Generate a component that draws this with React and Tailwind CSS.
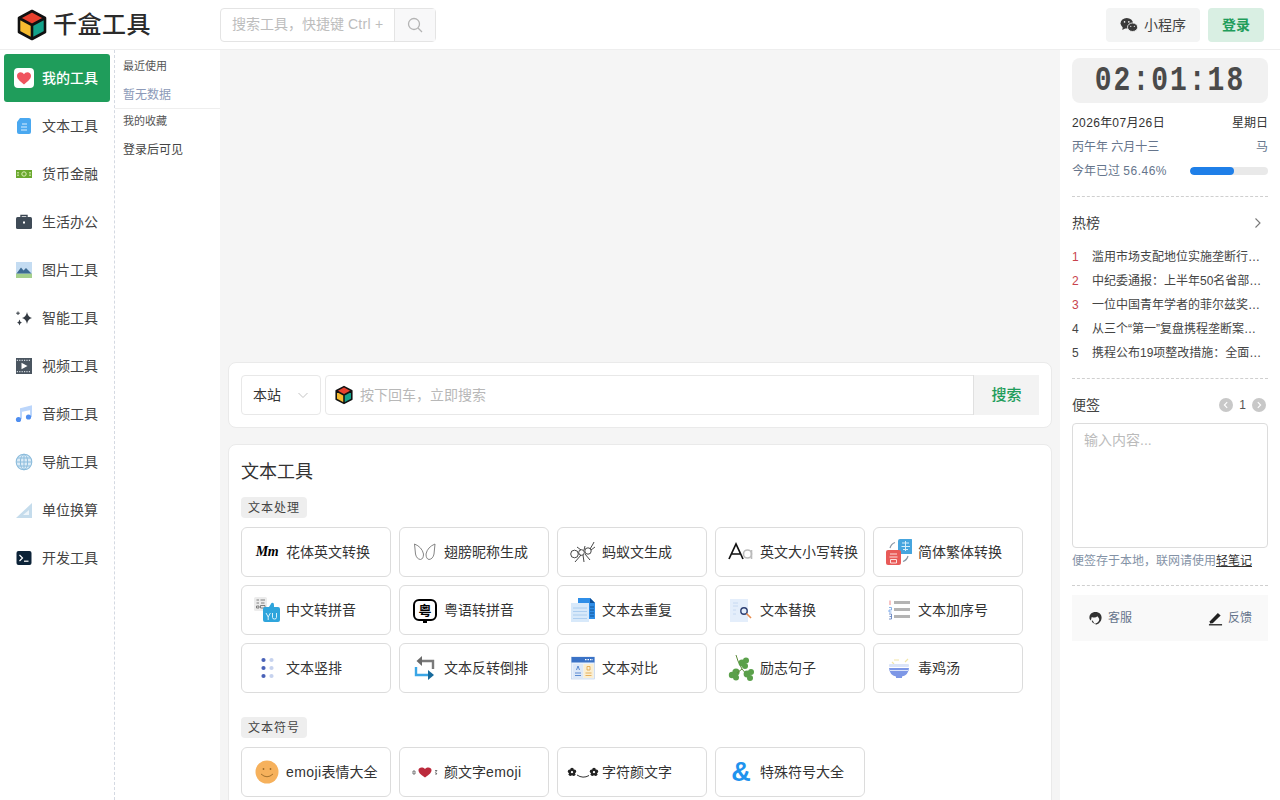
import React from "react";

const FONT = "font-['Liberation_Sans','Noto_Sans_CJK_SC',sans-serif]";

const Cube = ({ className }) => (
  <svg viewBox="0 0 30 32" className={className}>
    <path d="M15 2 L28 9 L15 16 L2 9 Z" fill="#e8412e" />
    <path d="M2 9 L15 16 V30 L2 23 Z" fill="#f6bb30" />
    <path d="M28 9 L15 16 V30 L28 23 Z" fill="#14a38b" />
    <path d="M15 2 L28 9 V23 L15 30 L2 23 V9 Z M2 9 L15 16 L28 9 M15 16 V30" fill="none" stroke="#111" strokeWidth="2.6" strokeLinejoin="round" />
  </svg>
);

const S = ({ children, box = "0 0 24 24" }) => (
  <svg viewBox={box} className="w-full h-full" fill="none">{children}</svg>
);

const Lat = ({ text }) =>
  text.split(/([A-Za-z0-9.%]+)/).map((p, i) =>
    i % 2 ? <span key={i} className="tracking-[0.4px]">{p}</span> : p
  );

const navIcons = {
  heart: (
    <S box="0 0 20 20">
      <rect width="20" height="20" rx="4" fill="#fff" />
      <path d="M10 16.5 C5 12.5 3 10.5 3 7.8 C3 5.6 4.8 4.2 6.5 4.2 C8 4.2 9.3 5 10 6.2 C10.7 5 12 4.2 13.5 4.2 C15.2 4.2 17 5.6 17 7.8 C17 10.5 15 12.5 10 16.5 Z" fill="#f0545f" />
    </S>
  ),
  doc: (
    <S box="0 0 20 20">
      <path d="M6 2 H15 Q17 2 17 4 V16 Q17 18 15 18 H5 Q3 18 3 16 V6 Z" fill="#4aa8f0" />
      <path d="M8 8 H13 M7 11 H13 M7 14 H13" stroke="#d8eeff" strokeWidth="1.2" />
    </S>
  ),
  money: (
    <S box="0 0 20 20">
      <rect x="2" y="6" width="16" height="8" fill="#6aa82e" />
      <ellipse cx="10" cy="10" rx="2.2" ry="2.2" fill="none" stroke="#dcefb8" strokeWidth="1" />
      <path d="M4 8 V12 M16 8 V12" stroke="#dcefb8" strokeWidth="1.4" strokeDasharray="1.5 1" />
    </S>
  ),
  case: (
    <S box="0 0 20 20">
      <path d="M7 5 V3.5 H13 V5" stroke="#3a4652" strokeWidth="1.4" />
      <rect x="2" y="5" width="16" height="12" rx="1.5" fill="#3f4b57" />
      <rect x="9" y="9.5" width="2" height="2" fill="#fff" />
    </S>
  ),
  image: (
    <S box="0 0 20 20">
      <rect x="2" y="2" width="16" height="16" fill="#c4dcf2" />
      <rect x="2" y="13.5" width="16" height="4.5" fill="#a5d08c" />
      <path d="M2.5 13.5 L7 7.5 L9.5 10.5 L12 8 L17.5 13.5 Z" fill="#3d6b93" />
    </S>
  ),
  spark: (
    <S box="0 0 20 20">
      <path d="M13 4 Q13.8 9 18 10 Q13.8 11 13 16 Q12.2 11 8 10 Q12.2 9 13 4 Z" fill="#333a42" />
      <path d="M5.5 11.5 Q5.9 14 8 14.5 Q5.9 15 5.5 17.5 Q5.1 15 3 14.5 Q5.1 14 5.5 11.5 Z" fill="#333a42" />
      <path d="M4 3.5 V7 M2.2 5.2 H5.8" stroke="#333a42" strokeWidth="1" />
    </S>
  ),
  video: (
    <S box="0 0 20 20">
      <rect x="2" y="2" width="16" height="16" fill="#4a5560" />
      <path d="M2.8 4.4 H17.2 M2.8 15.6 H17.2" stroke="#cfd6dc" strokeWidth="1.2" strokeDasharray="1.2 1.2" />
      <path d="M7.5 6.8 L13.5 10 L7.5 13.2 Z" fill="#fff" />
    </S>
  ),
  music: (
    <S box="0 0 20 20">
      <path d="M7 15 V5 L17 2.5 V13" stroke="#bcd6fb" strokeWidth="2" />
      <path d="M7 5 L17 2.5 V6 L7 8 Z" fill="#bcd6fb" />
      <circle cx="4.5" cy="15.5" r="2.6" fill="#4f8ef0" />
      <circle cx="14.5" cy="13" r="2.6" fill="#4f8ef0" />
    </S>
  ),
  globe: (
    <S box="0 0 20 20">
      <circle cx="10" cy="10" r="7.8" fill="#dcecf7" stroke="#8cbcdc" strokeWidth="1.1" />
      <ellipse cx="10" cy="10" rx="3.6" ry="7.8" stroke="#8cbcdc" strokeWidth="1" />
      <path d="M10 2 V18 M2.2 10 H17.8 M3.4 6 H16.6 M3.4 14 H16.6" stroke="#8cbcdc" strokeWidth="1" />
    </S>
  ),
  ruler: (
    <S box="0 0 20 20">
      <path d="M18 3 V18 H2 Z" fill="#c5dcec" />
      <path d="M15 10 V15 H9 Z" fill="#eef5fa" />
    </S>
  ),
  term: (
    <S box="0 0 20 20">
      <rect x="2.5" y="3" width="15" height="14" rx="2" fill="#0c2338" />
      <path d="M5.5 7 L8.5 10 L5.5 13" stroke="#fff" strokeWidth="1.2" />
      <path d="M10 13.2 H14.5" stroke="#fff" strokeWidth="1.2" />
    </S>
  ),
};

const nav = [
  ["我的工具", "heart", true],
  ["文本工具", "doc"],
  ["货币金融", "money"],
  ["生活办公", "case"],
  ["图片工具", "image"],
  ["智能工具", "spark"],
  ["视频工具", "video"],
  ["音频工具", "music"],
  ["导航工具", "globe"],
  ["单位换算", "ruler"],
  ["开发工具", "term"],
];

const toolIcons = {
  script: (
    <span className="font-['Liberation_Serif',serif] italic font-bold text-[14px] leading-none tracking-[-0.5px] text-black">Mm</span>
  ),
  wings: (
    <S box="0 0 26 26">
      <path d="M2.5 5 Q10 8 11.5 15 Q11.5 20 8.5 20.5 Q4.5 20 3.5 15 Q3 10 2.5 5 Z M23 5 Q15.5 8 14 15 Q14 20 17 20.5 Q21 20 22 15 Q22.5 10 23 5 Z" stroke="#777" strokeWidth="0.9" />
    </S>
  ),
  ant: (
    <S box="0 0 26 26">
      <circle cx="4.5" cy="15" r="3.8" stroke="#333" strokeWidth="0.9" />
      <circle cx="11.5" cy="13.5" r="2.8" stroke="#333" strokeWidth="0.9" />
      <circle cx="18" cy="12" r="3.2" stroke="#333" strokeWidth="0.9" />
      <path d="M20 10 L23 5 L24 3 M21 11 L25 8 M11 16 L5 23 M13 16 L14 23 M15 15 L20 21 M11 11 L7 8 M14 11 L15 7" stroke="#333" strokeWidth="0.9" />
    </S>
  ),
  aa: (
    <svg viewBox="0 0 26 26" className="w-full h-full" fill="none">
      <path d="M1 20 L8 5 L15 20 M3.5 15 H12.5" stroke="#111" strokeWidth="1.7" />
      <circle cx="19.5" cy="15" r="4" stroke="#bbb" strokeWidth="1.6" />
      <path d="M23.5 11 V20" stroke="#bbb" strokeWidth="1.6" />
    </svg>
  ),
  trad: (
    <svg viewBox="0 0 26 26" className="w-full h-full" fill="none">
      <path d="M4 9 Q5 5 9 3.5 M22 17 Q21 21 17 22.5" stroke="#8a97a5" strokeWidth="1.2" />
      <rect x="12" y="0" width="15" height="15" rx="2" fill="#46a5de" />
      <rect x="0" y="11" width="15" height="15" rx="2" fill="#e85a58" />
      <path d="M16 4 H23 M15.5 7.5 H24 M19.5 2 V12 M17 10.5 H22" stroke="#d6eefb" strokeWidth="1" />
      <path d="M4 15 H11 M3.5 18 H11.5 M4.5 20.5 H10.5 V24 H4.5 Z" stroke="#fde0df" strokeWidth="1" />
    </svg>
  ),
  pinyin: (
    <svg viewBox="0 0 26 26" className="w-full h-full" fill="none">
      <rect x="0" y="0" width="13" height="14" rx="1.5" fill="#ececec" />
      <path d="M2.5 3 H5 M2.5 6 H5 M2.5 9 H5 V11 H2.5 Z M6.5 3 H11 M7 6 H10.5 M6.5 8.5 H11 V11 H6.5 Z" stroke="#666" strokeWidth="0.8" />
      <path d="M9 12 Q9 10 11 10 H15 L17.5 6 Q20 5 20 8 V10 H24 Q26 10 26 12 V23 Q26 25 24 25 H11 Q9 25 9 23 Z" fill="#2fa5dc" />
      <path d="M12 16 L14.2 20 L16.4 16 M14.2 20 V23 M18.5 16 V20.5 Q18.5 22 20.5 22 Q22.5 22 22.5 20.5 V16" stroke="#d8f1fb" strokeWidth="1" />
    </svg>
  ),
  yue: (
    <div className="w-[24px] h-[22px] rounded-[6px] border-2 border-black flex items-center justify-center text-[13px] leading-none font-bold text-black relative">
      粤
      <span className="absolute -bottom-[4px] left-[8px] w-[4px] h-[3px] bg-black" />
    </div>
  ),
  dedupe: (
    <svg viewBox="0 0 26 26" className="w-full h-full" fill="none">
      <path d="M8 1 H20 L25 6 V22 H8 Z" fill="#2f8ee8" />
      <path d="M20 1 L25 6 H20 Z" fill="#0c4f98" />
      <rect x="1" y="6" width="18" height="19" fill="#d8e9fa" />
      <path d="M3 11 H17 M3 14.5 H17 M3 18 H17 M3 21.5 H17" stroke="#a8cbee" strokeWidth="0.9" />
      <path d="M20 10 H24 M20 13 H24 M20 16 H24 M20 19 H24" stroke="#124f8c" strokeWidth="0.9" />
    </svg>
  ),
  replace: (
    <svg viewBox="0 0 26 26" className="w-full h-full" fill="none">
      <rect x="2" y="2" width="18" height="23" fill="#e4eefb" />
      <path d="M5 6 H10 M5 9 H10 M5 13 H8 M5 17 H8" stroke="#c4d6ef" strokeWidth="0.9" />
      <circle cx="16" cy="14" r="3.2" stroke="#2d3f72" strokeWidth="1.4" />
      <path d="M18.5 16.5 L23 21" stroke="#e88a4a" strokeWidth="1.6" />
    </svg>
  ),
  numlist: (
    <svg viewBox="0 0 26 26" className="w-full h-full" fill="none">
      <path d="M4 3.5 V8" stroke="#e88" strokeWidth="1" />
      <path d="M3 10.5 H5.5 V13 H3 V15 H5.5" stroke="#6aa0e8" strokeWidth="0.8" />
      <path d="M3 17 H5.5 V22 H3 M3.5 19.5 H5.5" stroke="#5577bb" strokeWidth="0.8" />
      <path d="M8 5.5 H24 M8 12.5 H24 M8 19.5 H24" stroke="#b4b4b4" strokeWidth="3" />
    </svg>
  ),
  vertical: (
    <svg viewBox="0 0 26 26" className="w-full h-full">
      <g fill="#4a62b8"><circle cx="9.5" cy="5" r="2.1" /><circle cx="9.5" cy="13" r="2.1" /><circle cx="9.5" cy="21" r="2.1" /></g>
      <g fill="#c6d2ee"><circle cx="17.5" cy="5" r="2.1" /><circle cx="17.5" cy="13" r="2.1" /><circle cx="17.5" cy="21" r="2.1" /></g>
    </svg>
  ),
  reverse: (
    <svg viewBox="0 0 26 26" className="w-full h-full" fill="none">
      <path d="M21 14 V6 H7" stroke="#7a7a7a" strokeWidth="2.4" />
      <path d="M10 1 L4.5 6 L10 11 Z" fill="#6a6a6a" />
      <path d="M4 12 V20 H18" stroke="#3aa6e6" strokeWidth="2.4" />
      <path d="M16 15 L22 20 L16 25 Z" fill="#176a9c" />
    </svg>
  ),
  compare: (
    <svg viewBox="0 0 26 26" className="w-full h-full" fill="none">
      <rect x="1.5" y="2" width="23" height="22" fill="#eaf2fc" stroke="#b8cde8" strokeWidth="0.6" />
      <rect x="1.5" y="2" width="23" height="5.5" fill="#3a72c6" />
      <path d="M15 4.7 H23" stroke="#fff" strokeWidth="1.2" strokeDasharray="1.5 1" />
      <rect x="13.5" y="9" width="10" height="14" fill="#fbeed0" />
      <rect x="3" y="9" width="10" height="14" fill="#dce8f8" />
      <path d="M6.5 15 L8 11 L9.5 15 M5 18 H11 M5 20.5 H11" stroke="#3a72c6" strokeWidth="0.8" />
      <path d="M17 11.5 H20 V15 H17 Z M15.5 18 H21.5 M15.5 20.5 H21.5" stroke="#e0a040" strokeWidth="0.8" />
    </svg>
  ),
  clover: (
    <svg viewBox="0 0 26 26" className="w-full h-full" fill="none">
      <path d="M8 0 L10 6 L14 14 L19 20" stroke="#5d8a3a" strokeWidth="1" />
      <g fill="#5aa04a">
        <circle cx="8" cy="17" r="3.6" /><circle cx="4" cy="20" r="3.2" /><circle cx="8" cy="22.5" r="3" />
        <circle cx="14" cy="8" r="3.4" /><circle cx="18" cy="5.5" r="3" /><circle cx="17" cy="11" r="3" />
        <circle cx="19" cy="19" r="3.4" /><circle cx="23" cy="17" r="3" /><circle cx="22" cy="23" r="3" />
      </g>
      <path d="M14 14 L9 18" stroke="#5d8a3a" strokeWidth="1" />
    </svg>
  ),
  bowl: (
    <svg viewBox="0 0 26 26" className="w-full h-full" fill="none">
      <path d="M8 5 H13 M6 7 L8 9 M19 7 L22 4" stroke="#f3e6a8" strokeWidth="1.2" />
      <rect x="3" y="9" width="20" height="3" rx="1" fill="#dbe4f8" />
      <path d="M3 13 H23 Q22.5 20 16 21.5 V23 H10 V21.5 Q3.5 20 3 13 Z" fill="#7d97e6" />
      <path d="M4 15.5 H22" stroke="#dbe4f8" strokeWidth="1" />
    </svg>
  ),
  smile: (
    <svg viewBox="0 0 26 26" className="w-full h-full" fill="none">
      <circle cx="13" cy="13" r="11.5" fill="#f6b15c" />
      <circle cx="9.5" cy="10" r="0.9" fill="#9a6a28" /><circle cx="16.5" cy="10" r="0.9" fill="#9a6a28" />
      <path d="M7 15 Q13 20.5 19 15" stroke="#9a6a28" strokeWidth="0.9" />
    </svg>
  ),
  kao: (
    <svg viewBox="0 0 26 26" className="w-full h-full" fill="none">
      <path d="M13 18.5 C8 15 6.5 13.5 6.5 11 C6.5 8.5 10.5 7.5 13 10 C15.5 7.5 19.5 8.5 19.5 11 C19.5 13.5 18 15 13 18.5 Z" fill="#bb2a3c" />
      <path d="M1 12 H3 V15 H1 Z M23 11.5 H25 L23.5 13.2 L25 15 H23" stroke="#555" strokeWidth="0.8" />
    </svg>
  ),
  flower: (
    <svg viewBox="0 0 32 12" className="w-[32px] h-[12px] shrink-0" fill="none">
      <g fill="#222"><circle cx="5" cy="3.5" r="1.8" /><circle cx="2.6" cy="5.4" r="1.8" /><circle cx="7.4" cy="5.4" r="1.8" /><circle cx="3.4" cy="8.2" r="1.8" /><circle cx="6.6" cy="8.2" r="1.8" /></g>
      <circle cx="5" cy="6" r="0.9" fill="#fff" />
      <g fill="#222"><circle cx="27" cy="3.5" r="1.8" /><circle cx="24.6" cy="5.4" r="1.8" /><circle cx="29.4" cy="5.4" r="1.8" /><circle cx="25.4" cy="8.2" r="1.8" /><circle cx="28.6" cy="8.2" r="1.8" /></g>
      <circle cx="27" cy="6" r="0.9" fill="#fff" />
      <path d="M10 9 Q16 13 22 9.5" stroke="#333" strokeWidth="1" />
    </svg>
  ),
  amp: (
    <span className="text-[27px] leading-none font-bold text-[#1f93ee] font-['Liberation_Sans']">&amp;</span>
  ),
};

const groupA = [
  ["花体英文转换", "script"],
  ["翅膀昵称生成", "wings"],
  ["蚂蚁文生成", "ant"],
  ["英文大小写转换", "aa"],
  ["简体繁体转换", "trad"],
  ["中文转拼音", "pinyin"],
  ["粤语转拼音", "yue"],
  ["文本去重复", "dedupe"],
  ["文本替换", "replace"],
  ["文本加序号", "numlist"],
  ["文本竖排", "vertical"],
  ["文本反转倒排", "reverse"],
  ["文本对比", "compare"],
  ["励志句子", "clover"],
  ["毒鸡汤", "bowl"],
];
const groupB = [
  ["emoji表情大全", "smile"],
  ["颜文字emoji", "kao"],
  ["字符颜文字", "flower"],
  ["特殊符号大全", "amp"],
];

const hot = [
  "滥用市场支配地位实施垄断行为，携程被罚",
  "中纪委通报：上半年50名省部级干部被查",
  "一位中国青年学者的菲尔兹奖之路与选择",
  "从三个“第一”复盘携程垄断案的来龙去脉",
  "携程公布19项整改措施：全面取消不合理限制",
];

const Tool = ({ label, icon }) => (
  <div className="w-[150px] h-[50px] flex items-center gap-[6px] px-3 border border-[#dcdcdc] rounded-md bg-white shrink-0">
    <span className="w-[26px] h-[26px] flex items-center justify-center shrink-0">{toolIcons[icon]}</span>
    <span className="text-sm text-[#333] whitespace-nowrap"><Lat text={label} /></span>
  </div>
);

const Tag = ({ children }) => (
  <div className="w-fit h-[21px] px-[7px] flex items-center bg-[#eeeeee] rounded-sm text-xs tracking-[1px] text-[#444]">{children}</div>
);

const Dash = ({ className = "" }) => <div className={"border-t border-dashed border-[#cfcfcf] " + className} />;

export default function App() {
  return (
    <div className={"h-screen overflow-hidden flex flex-col bg-white " + FONT}>
      <header className="h-[50px] shrink-0 border-b border-[#eeeeee] flex items-center">
        <div className="w-[220px] shrink-0 flex items-center pl-[17px] gap-[6px]">
          <Cube className="w-[30px] h-[32px]" />
          <span className="text-2xl font-medium tracking-[0.5px] text-[#2b2b2b] leading-none">千盒工具</span>
        </div>
        <div className="flex h-[34px] w-[216px] border border-[#e4e4e4] rounded-sm">
          <div className="w-[173px] pl-[11px] pr-[9px] pb-[1px] flex items-center text-sm text-[#bdbdbd] whitespace-nowrap">
            <span className="block overflow-hidden">搜索工具，快捷键 <span className="tracking-[0.3px]">Ctrl + K</span></span>
          </div>
          <div className="flex-1 bg-[#f8f8f9] border-l border-[#e4e4e4] flex items-center justify-center">
            <svg viewBox="0 0 16 16" className="w-[16px] h-[16px]" fill="none" stroke="#b4b4b4" strokeWidth="1.3"><circle cx="7" cy="7" r="5.5" /><path d="M11 11 L15 15" /></svg>
          </div>
        </div>
        <div className="ml-auto flex items-center gap-2 pr-4">
          <div className="w-[94px] h-[34px] bg-[#f3f4f4] rounded-sm flex items-center justify-center gap-[6px] text-sm text-[#444]">
            <svg viewBox="0 0 20 18" className="w-[18px] h-[16px]" fill="#3a3a3a">
              <ellipse cx="7.5" cy="7" rx="7" ry="6" />
              <path d="M3 11 L2.5 14.5 L6.5 12.5 Z" />
              <ellipse cx="14" cy="11.5" rx="5.7" ry="4.8" stroke="#f3f4f4" strokeWidth="1" />
              <circle cx="5" cy="5.5" r="0.9" fill="#f3f4f4" /><circle cx="9.8" cy="5.5" r="0.9" fill="#f3f4f4" />
              <circle cx="12" cy="10.5" r="0.7" fill="#f3f4f4" /><circle cx="16" cy="10.5" r="0.7" fill="#f3f4f4" />
            </svg>
            小程序
          </div>
          <div className="w-[56px] h-[34px] bg-[#d9efe3] rounded-sm flex items-center justify-center text-sm font-bold text-[#1f9d5b]">登录</div>
        </div>
      </header>

      <div className="flex-1 flex min-h-0">
        <aside className="w-[115px] shrink-0 border-r border-dashed border-[#d4d9e2] pl-1 pt-1">
          {nav.map(([label, icon, active]) => (
            <div key={label} className={"w-[106px] h-[48px] flex items-center gap-[8px] pl-[10px] rounded-[3px] text-sm " + (active ? "bg-[#1f9d5b] text-white font-medium" : "text-[#444]")}>
              <span className="w-[20px] h-[20px] shrink-0">{navIcons[icon]}</span>
              {label}
            </div>
          ))}
        </aside>

        <div className="w-[105px] shrink-0">
          <div className="pt-[9px] h-[58px] px-2">
            <div className="text-[11px] leading-[14px] text-[#555]">最近使用</div>
            <div className="text-xs leading-[16px] mt-[14px] text-[#8c9ab8]">暂无数据</div>
          </div>
          <div className="border-t border-[#eeeeee] pt-[5px] px-2">
            <div className="text-[11px] leading-[14px] text-[#555]">我的收藏</div>
            <div className="text-xs leading-[16px] mt-[14px] text-[#444]">登录后可见</div>
          </div>
        </div>

        <main className="flex-1 min-w-0 bg-[#f5f5f5] px-2 overflow-hidden">
          <div className="h-[312px]" />
          <section className="h-[66px] bg-white border border-[#eaeaea] rounded-lg flex items-center px-3 gap-1">
            <div className="w-[80px] h-[40px] border border-[#e8e8e8] rounded-sm flex items-center justify-between pl-[11px] pr-[11px] text-sm text-[#333]">
              本站
              <svg viewBox="0 0 12 12" className="w-[12px] h-[12px]" fill="none" stroke="#c4c4c4" strokeWidth="1"><path d="M1.5 4 L6 8.5 L10.5 4" /></svg>
            </div>
            <div className="flex-1 h-[40px] flex border border-[#e8e8e8] rounded-sm">
              <div className="flex-1 flex items-center pl-[9px] gap-[7px] text-sm text-[#b8b8b8]">
                <Cube className="w-[18px] h-[20px]" />
                按下回车，立即搜索
              </div>
              <div className="w-[66px] -my-px -mr-px bg-[#f3f3f3] border-l border-[#e0e0e0] flex items-center justify-center text-[15px] font-medium text-[#1f9d5b]">搜索</div>
            </div>
          </section>

          <section className="mt-4 bg-white border border-[#eaeaea] rounded-lg px-3 pt-[15px] pb-6">
            <h2 className="text-lg leading-[24px] text-[#333]">文本工具</h2>
            <div className="mt-[13px]"><Tag>文本处理</Tag></div>
            <div className="mt-[9px] flex flex-wrap gap-2">
              {groupA.map(([l, i]) => <Tool key={l} label={l} icon={i} />)}
            </div>
            <div className="mt-6"><Tag>文本符号</Tag></div>
            <div className="mt-[9px] flex flex-wrap gap-2">
              {groupB.map(([l, i]) => <Tool key={l} label={l} icon={i} />)}
            </div>
          </section>
        </main>

        <aside className="w-[220px] shrink-0 px-3 pt-2">
          <div className="h-[45px] bg-[#f1f1f1] rounded-lg flex items-center justify-center overflow-hidden">
            <span className="font-['Liberation_Mono',monospace] font-bold text-[28px] tracking-[2px] text-[#4a4a4a] leading-none scale-y-125">02:01:18</span>
          </div>
          <div className="mt-[12px] flex justify-between text-xs leading-[16px] text-[#333]"><span><Lat text="2026年07月26日" /></span><span>星期日</span></div>
          <div className="mt-2 flex justify-between text-xs leading-[16px] text-[#66758c]"><span>丙午年 六月十三</span><span>马</span></div>
          <div className="mt-2 flex justify-between items-center text-xs leading-[16px] text-[#66758c]">
            <span>今年已过 <span className="tracking-[0.5px]">56.46%</span></span>
            <div className="w-[78px] h-[8px] rounded-full bg-[#e9e9e9] overflow-hidden"><div className="h-full w-[44px] rounded-full bg-[#1f7fe8]" /></div>
          </div>
          <Dash className="mt-[17px]" />
          <div className="mt-[16px] flex justify-between items-center text-sm leading-[20px] text-[#444]">
            热榜
            <span className="pr-[5px]">
              <svg viewBox="0 0 10 12" className="w-[10px] h-[12px]" fill="none" stroke="#777" strokeWidth="1.1"><path d="M2.5 1.5 L7 6 L2.5 10.5" /></svg>
            </span>
          </div>
          <div className="mt-[12px]">
            {hot.map((t, i) => (
              <div key={t} className="h-[24px] flex items-center text-xs text-[#444]">
                <span className={"w-[20px] shrink-0 " + (i < 3 ? "text-[#c8424c]" : "text-[#444]")}>{i + 1}</span>
                <span className="truncate w-[171px]">{t}</span>
              </div>
            ))}
          </div>
          <Dash className="mt-[13px]" />
          <div className="mt-[16px] flex justify-between items-center text-sm leading-[20px] text-[#444]">
            便签
            <div className="flex items-center gap-[6px] pr-[2px] text-xs text-[#555]">
              <span className="w-[14px] h-[14px] rounded-full bg-[#c8c8c8] flex items-center justify-center"><svg viewBox="0 0 10 10" className="w-[8px] h-[8px]" fill="none" stroke="#fff" strokeWidth="1.4"><path d="M6.5 1.5 L3 5 L6.5 8.5" /></svg></span>
              1
              <span className="w-[14px] h-[14px] rounded-full bg-[#c8c8c8] flex items-center justify-center"><svg viewBox="0 0 10 10" className="w-[8px] h-[8px]" fill="none" stroke="#fff" strokeWidth="1.4"><path d="M3.5 1.5 L7 5 L3.5 8.5" /></svg></span>
            </div>
          </div>
          <div className="mt-[8px] h-[125px] border border-[#dcdcdc] rounded-sm px-[11px] py-[6px] text-sm leading-[20px] text-[#bbbbbb]">输入内容...</div>
          <div className="mt-[5px] text-xs leading-[16px] text-[#8492a6] whitespace-nowrap">便签存于本地，联网请使用<span className="text-[#333] underline">轻笔记</span></div>
          <Dash className="mt-[16px]" />
          <div className="mt-[9px] h-[46px] bg-[#f9f9f9] flex items-center justify-between px-[16px] text-xs text-[#66758c]">
            <span className="flex items-center gap-[5px]">
              <svg viewBox="0 0 16 16" className="w-[15px] h-[15px]" fill="#333">
                <path d="M8 1 C4 1 1.5 3.5 1.5 7 C1.5 8.5 2 9.5 3 10 L4 6.5 Q8 8 10 5.5 Q11.5 7 12 8.5 C12 11 10 13 8 13 L8 14.5 C11 14.5 14.5 11.5 14.5 7 C14.5 3.5 12 1 8 1 Z" />
                <path d="M5 10 Q6 13 8 13 Q5 14 3.8 10.5 Z" />
              </svg>
              客服
            </span>
            <span className="flex items-center gap-[5px]">
              <svg viewBox="0 0 16 16" className="w-[15px] h-[15px]" fill="#222">
                <path d="M2 11 L10.5 2 L13.5 4.8 L5 13 L2 13.2 Z" />
                <rect x="1" y="14" width="14" height="1.4" />
              </svg>
              反馈
            </span>
          </div>
        </aside>
      </div>
    </div>
  );
}
